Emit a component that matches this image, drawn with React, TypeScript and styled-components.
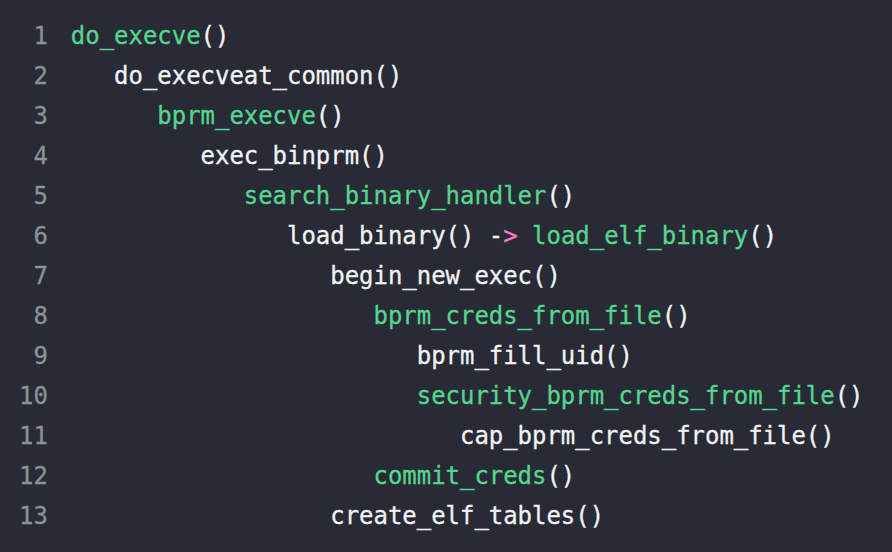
import React from "react";
import styled, { createGlobalStyle } from "styled-components";

const Global = createGlobalStyle`
  html, body { margin: 0; padding: 0; background: #282a36; }
  body { width: 892px; height: 552px; overflow: hidden; }
`;

const Block = styled.pre`
  margin: 0;
  box-sizing: border-box;
  width: 892px;
  height: 552px;
  padding: 16px 0 0 19px;
  background: #282a36;
  font-family: "DejaVu Sans Mono", "Liberation Mono", monospace;
  font-size: 23.95px;
  line-height: 40px;
  color: #f2f2f2;
  -webkit-text-stroke: 0.3px currentColor;
`;

const Row = styled.div`
  display: flex;
  white-space: pre;
`;

const LineNo = styled.span`
  width: 2ch;
  text-align: right;
  color: #8e909b;
  margin-right: 1.6ch;
  flex: none;
`;

const Code = styled.span<{ $indent: number }>`
  padding-left: ${(p) => p.$indent * 3}ch;
`;

const Fn = styled.span<{ $green?: boolean }>`
  color: ${(p) => (p.$green ? "#55d68e" : "#f2f2f2")};
`;

const Arrow = styled.span`
  color: #ff79c6;
`;

type Line = { indent: number; name: string; green?: boolean; extra?: string };

const lines: Line[] = [
  { indent: 0, name: "do_execve", green: true },
  { indent: 1, name: "do_execveat_common" },
  { indent: 2, name: "bprm_execve", green: true },
  { indent: 3, name: "exec_binprm" },
  { indent: 4, name: "search_binary_handler", green: true },
  { indent: 5, name: "load_binary", extra: "load_elf_binary" },
  { indent: 6, name: "begin_new_exec" },
  { indent: 7, name: "bprm_creds_from_file", green: true },
  { indent: 8, name: "bprm_fill_uid" },
  { indent: 8, name: "security_bprm_creds_from_file", green: true },
  { indent: 9, name: "cap_bprm_creds_from_file" },
  { indent: 7, name: "commit_creds", green: true },
  { indent: 6, name: "create_elf_tables" },
];

export default function App() {
  return (
    <>
      <Global />
      <Block>
        {lines.map((l, i) => (
          <Row key={i}>
            <LineNo>{i + 1}</LineNo>
            <Code $indent={l.indent}>
              <Fn $green={l.green}>{l.name}</Fn>()
              {l.extra && (
                <>
                  {" "}
                  <Fn>-</Fn>
                  <Arrow>&gt;</Arrow> <Fn $green>{l.extra}</Fn>()
                </>
              )}
            </Code>
          </Row>
        ))}
      </Block>
    </>
  );
}
